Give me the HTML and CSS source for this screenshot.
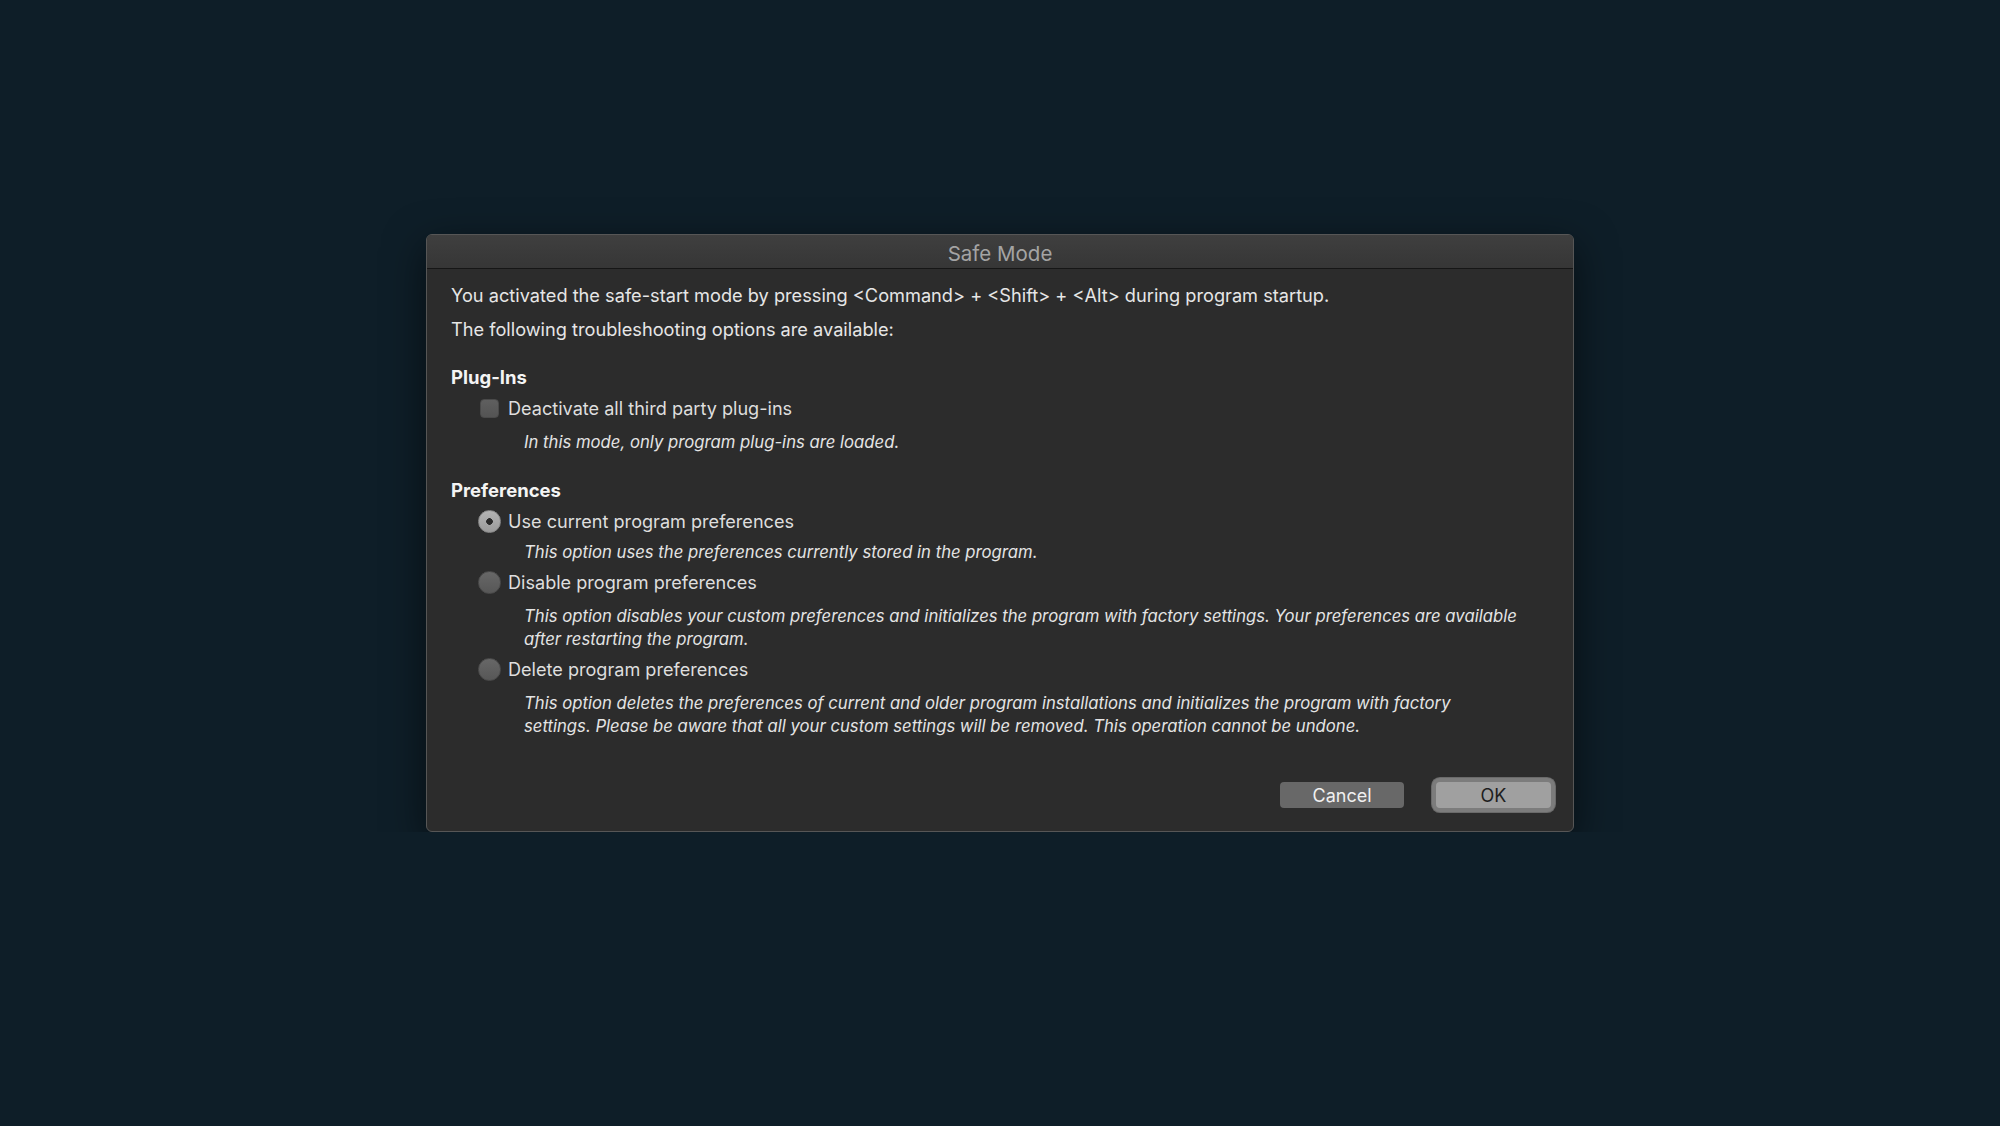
FILE: index.html
```html
<!DOCTYPE html>
<html lang="en">

<head>
  <meta charset="UTF-8" />
  <meta name="viewport" content="width=device-width, initial-scale=1.0" />
  <title>Safe Mode</title>
  <link rel="stylesheet" href="styles.css">
</head>

<body>
  <div class="dialog">
    <div class="titlebar">Safe Mode</div>
    <div class="content">
      <p class="intro">You activated the safe-start mode by pressing &lt;Command&gt; + &lt;Shift&gt; + &lt;Alt&gt; during program startup.</p>
      <p class="intro">The following troubleshooting options are available:</p>

      <h2>Plug-Ins</h2>
      <div class="option">
        <span class="control checkbox"></span>
        <span class="label">Deactivate all third party plug-ins</span>
      </div>
      <p class="hint">In this mode, only program plug-ins are loaded.</p>

      <h2>Preferences</h2>
      <div class="option">
        <span class="control radio checked"></span>
        <span class="label">Use current program preferences</span>
      </div>
      <p class="hint compact">This option uses the preferences currently stored in the program.</p>
      <div class="option">
        <span class="control radio"></span>
        <span class="label">Disable program preferences</span>
      </div>
      <p class="hint">This option disables your custom preferences and initializes the program with factory settings. Your preferences are available after restarting the program.</p>
      <div class="option">
        <span class="control radio"></span>
        <span class="label">Delete program preferences</span>
      </div>
      <p class="hint">This option deletes the preferences of current and older program installations and initializes the program with factory<br>settings. Please be aware that all your custom settings will be removed. This operation cannot be undone.</p>
    </div>
    <div class="buttons">
      <button class="btn">Cancel</button>
      <button class="btn default">OK</button>
    </div>
  </div>
</body>

</html>
```

FILE: styles.css
```css
body {
  font-family: 'Inter', 'Noto Sans', sans-serif;
  margin: 0;
  padding: 234px 0 0;
  background-color: #0e1e28;
  color: #e6e6e6;
}

.dialog {
  width: 1148px;
  height: 598px;
  margin: 0 auto;
  box-sizing: border-box;
  background: #2c2c2c;
  border: 1px solid #565656;
  border-radius: 6px;
  box-shadow: 0 12px 40px rgba(0, 0, 0, 0.55);
  display: flex;
  flex-direction: column;
  overflow: hidden;
}

.titlebar {
  height: 31px;
  padding-top: 2px;
  line-height: 33px;
  text-align: center;
  font-size: 20.5px;
  color: #a4a4a4;
  background: linear-gradient(#3f3f3f, #363636);
  border-bottom: 1px solid #161616;
}

.content {
  padding: 14px 24px 0;
  flex: 1;
}

.intro {
  margin: 0;
  font-size: 18.2px;
  line-height: 24px;
}

.intro + .intro {
  margin-top: 10px;
}

h2 {
  margin: 24px 0 7px;
  font-size: 18.5px;
  line-height: 24px;
  font-weight: 700;
  color: #f4f4f4;
}

.option {
  display: flex;
  align-items: center;
  height: 24px;
  margin: 6px 0 0 26px;
  font-size: 18.1px;
  color: #dedede;
}

.control {
  width: 24px;
  height: 24px;
  display: flex;
  align-items: center;
  justify-content: center;
  margin-right: 7px;
}

.control::before {
  content: '';
  display: block;
  box-sizing: border-box;
}

.checkbox::before {
  width: 19px;
  height: 19px;
  border-radius: 4px;
  background: linear-gradient(#5f5f5f, #545454);
  border: 1px solid #4a4a4a;
}

.radio::before {
  width: 23px;
  height: 23px;
  border-radius: 50%;
  background: linear-gradient(#676767, #575757);
  border: 1px solid #4c4c4c;
}

.radio.checked::before {
  background: radial-gradient(circle, #2a2a2a 0 3px, transparent 3.6px), linear-gradient(#b4b4b4, #9a9a9a);
  border-color: #8a8a8a;
}

.hint {
  margin: 11px 0 0 73px;
  font-size: 16.7px;
  line-height: 23px;
  font-style: italic;
  color: #e4e4e4;
  max-width: 1000px;
}

.hint.compact {
  margin-top: 8px;
}

.buttons {
  display: flex;
  justify-content: flex-end;
  align-items: center;
  gap: 32px;
  padding: 0 22px 23px;
}

.btn {
  width: 124px;
  height: 26px;
  padding: 0;
  font-family: inherit;
  font-size: 18px;
  border: none;
  border-radius: 4px;
  background-color: #686868;
  color: #f0f0f0;
}

.btn.default {
  width: 115px;
  background-color: #a0a0a0;
  color: #1e1e1e;
  box-shadow: 0 0 0 4px #7c7c7c, 0 0 0 5px #6a6a6a;
}
```
